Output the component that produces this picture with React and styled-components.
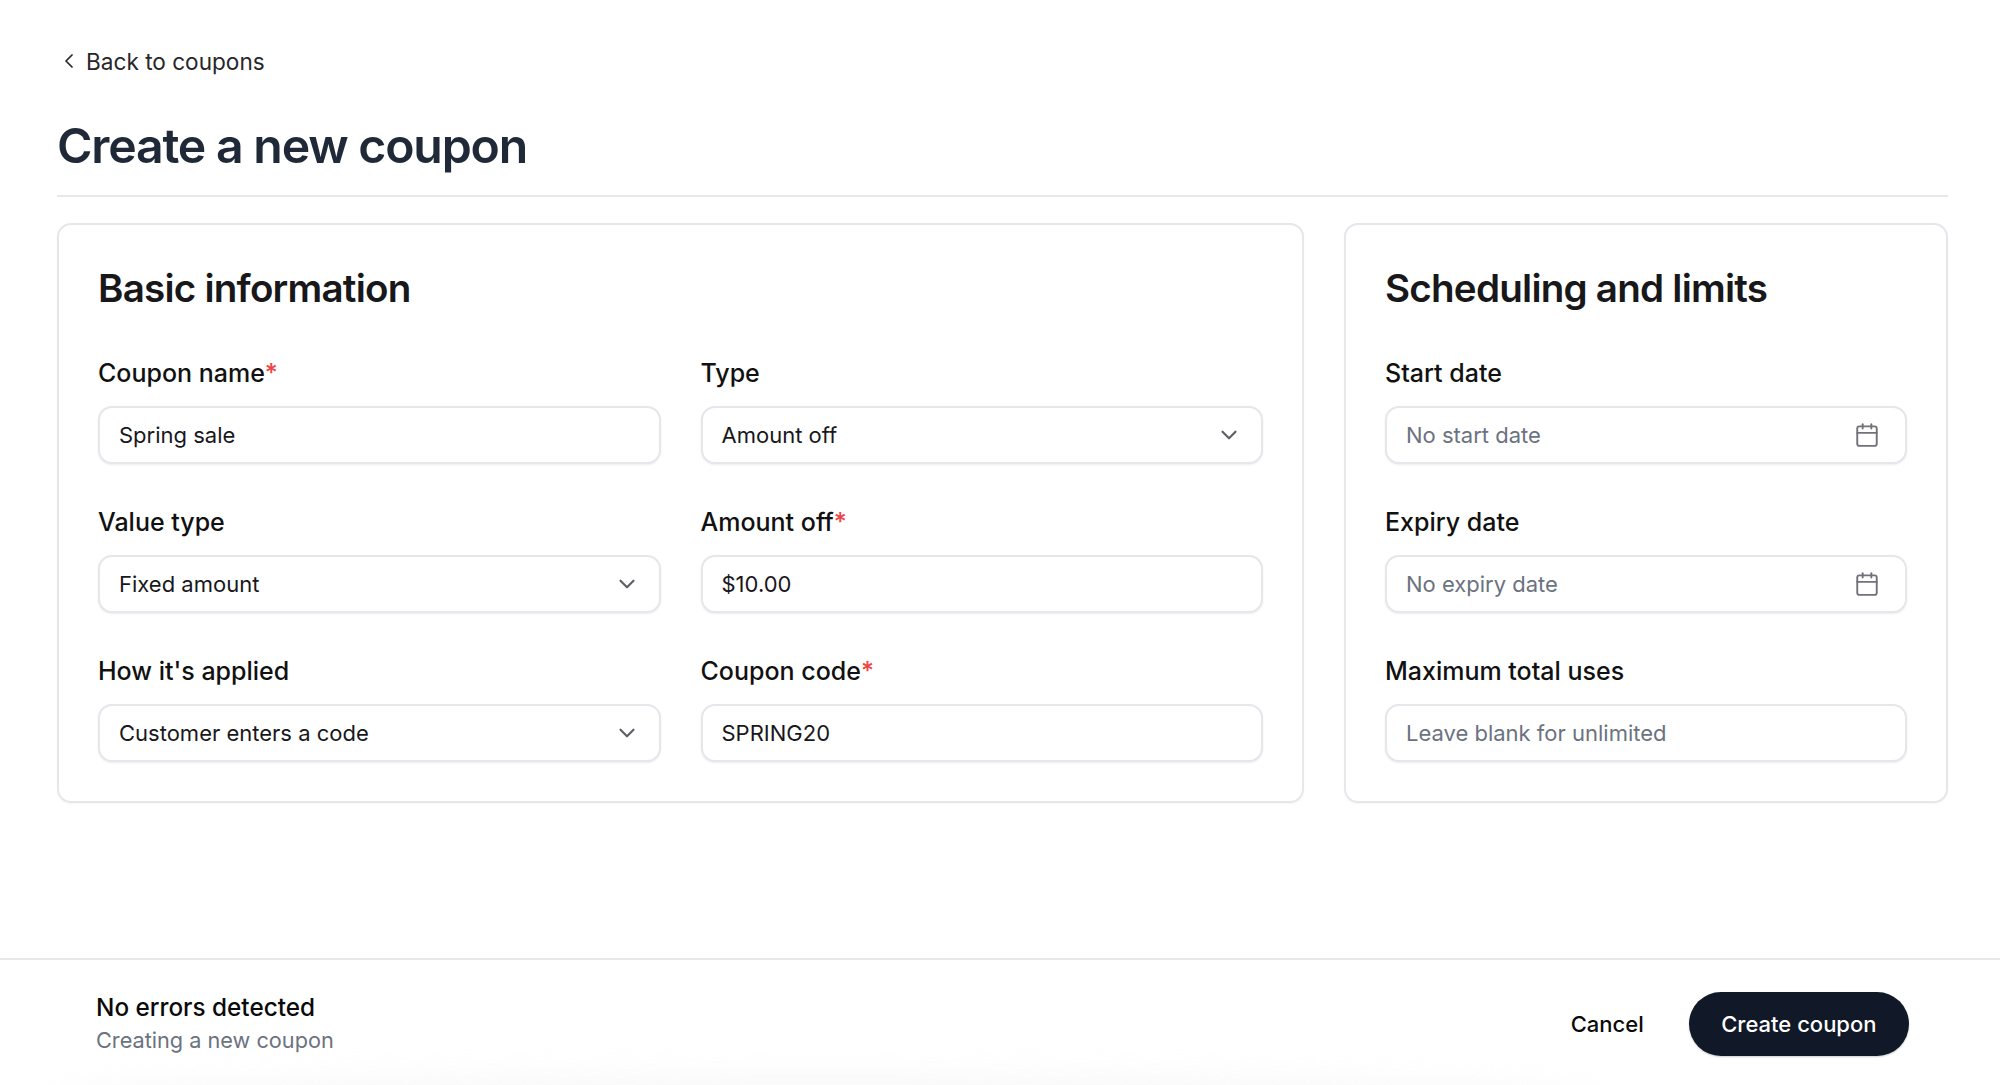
import React from "react";
import styled, { createGlobalStyle } from "styled-components";
import { Calendar, ChevronDown, ChevronLeft } from "lucide-react";

const GlobalStyle = createGlobalStyle`
  * {
    box-sizing: border-box;
  }

  html,
  body {
    margin: 0;
    background: #fff;
    font-family: Inter, "Liberation Sans", sans-serif;
  }
`;

const Page = styled.div`
  height: 1085px;
  display: flex;
  flex-direction: column;
  overflow: hidden;
`;

const Main = styled.main`
  flex: 1;
  padding: 45px 52px 0 57px;
`;

const BackLink = styled.a`
  display: flex;
  align-items: center;
  gap: 5px;
  height: 32px;
  font-size: 22.6px;
  color: #27272a;
`;

const Title = styled.h1`
  margin: 36px 0 0;
  padding-bottom: 17px;
  border-bottom: 2px solid #e5e7eb;
  font-size: 48.2px;
  line-height: 65px;
  font-weight: 600;
  letter-spacing: -0.025em;
  color: #1f2937;
`;

const Cards = styled.div`
  display: grid;
  grid-template-columns: 1247px 604px;
  gap: 40px;
  margin-top: 26px;
`;

const Card = styled.section`
  padding: 38px 39px 39px;
  height: 580px;
  border: 2px solid #e5e7eb;
  border-radius: 14px;
  box-shadow: 0 1px 2px rgba(17, 24, 39, 0.04);
`;

const CardTitle = styled.h2`
  margin: 0;
  height: 50px;
  font-size: 38.6px;
  line-height: 50px;
  font-weight: 600;
  letter-spacing: -0.02em;
  color: #18181b;
`;

const FieldGrid = styled.div`
  display: grid;
  grid-template-columns: ${(p) => (p.$columns === 2 ? "1fr 1fr" : "1fr")};
  column-gap: 40px;
  row-gap: 42px;
  margin-top: 44px;
`;

const Field = styled.div`
  display: flex;
  flex-direction: column;
  gap: 17px;
`;

const Label = styled.label`
  font-size: 25px;
  line-height: 32px;
  font-weight: 500;
  color: #111;
`;

const Required = styled.span`
  color: #ef4444;
`;

const Control = styled.div`
  display: flex;
  align-items: center;
  justify-content: space-between;
  height: 58px;
  padding: 0 19px;
  border: 2px solid #e5e7eb;
  border-radius: 14px;
  background: #fff;
  box-shadow: 0 1px 2px rgba(17, 24, 39, 0.08);
  font-size: 22px;
  color: ${(p) => (p.$placeholder ? "#6b7280" : "#18181b")};

  svg {
    flex-shrink: 0;
    color: ${(p) => (p.$placeholder ? "#71717a" : "#5f5f66")};
    margin-right: ${(p) => (p.$placeholder ? "6px" : "0")};
  }
`;

const Footer = styled.footer`
  position: relative;
  height: 127px;
  display: flex;
  align-items: center;
  justify-content: space-between;
  padding: 3px 91px 0 96px;
  border-top: 2px solid #e5e7eb;
  background: #fff;

  &::after {
    content: "";
    position: absolute;
    left: 50px;
    right: 400px;
    bottom: -34px;
    height: 44px;
    border-radius: 50%;
    background: #f4f4f5;
    filter: blur(14px);
    opacity: 0.6;
  }
`;

const Status = styled.div`
  position: relative;
  z-index: 1;
  display: flex;
  flex-direction: column;
`;

const StatusTitle = styled.div`
  font-size: 24.3px;
  line-height: 33px;
  font-weight: 500;
  color: #0a0a0a;
`;

const StatusText = styled.div`
  font-size: 21.7px;
  line-height: 33px;
  color: #6b7280;
`;

const Actions = styled.div`
  position: relative;
  z-index: 1;
  display: flex;
  align-items: center;
  gap: 45px;
`;

const CancelButton = styled.button`
  padding: 0;
  border: 0;
  background: none;
  font: 500 22px Inter, sans-serif;
  color: #0a0a0a;
`;

const PrimaryButton = styled.button`
  height: 64px;
  padding: 0 32.5px;
  border: 0;
  border-radius: 32px;
  background: #111827;
  font: 500 22px Inter, sans-serif;
  color: #fff;
  box-shadow: 0 1px 2px rgba(0, 0, 0, 0.2);
`;

const basicFields = [
  { label: "Coupon name", value: "Spring sale", required: true },
  { label: "Type", value: "Amount off", select: true },
  { label: "Value type", value: "Fixed amount", select: true },
  { label: "Amount off", value: "$10.00", required: true },
  { label: "How it's applied", value: "Customer enters a code", select: true },
  { label: "Coupon code", value: "SPRING20", required: true },
];

const limitFields = [
  { label: "Start date", placeholder: "No start date", date: true },
  { label: "Expiry date", placeholder: "No expiry date", date: true },
  { label: "Maximum total uses", placeholder: "Leave blank for unlimited" },
];

const FormField = ({ label, value, placeholder, required, select, date }) => (
  <Field>
    <Label>
      {label}
      {required && <Required>*</Required>}
    </Label>
    <Control $placeholder={!!placeholder}>
      {value || placeholder}
      {select && <ChevronDown size={26} strokeWidth={2} />}
      {date && <Calendar size={26} strokeWidth={1.75} />}
    </Control>
  </Field>
);

const App = () => {
  return (
    <Page>
      <GlobalStyle />
      <Main>
        <BackLink>
          <ChevronLeft size={24} strokeWidth={1.75} />
          Back to coupons
        </BackLink>
        <Title>Create a new coupon</Title>

        <Cards>
          <Card>
            <CardTitle>Basic information</CardTitle>
            <FieldGrid $columns={2}>
              {basicFields.map((field) => (
                <FormField {...field} key={field.label} />
              ))}
            </FieldGrid>
          </Card>

          <Card>
            <CardTitle>Scheduling and limits</CardTitle>
            <FieldGrid>
              {limitFields.map((field) => (
                <FormField {...field} key={field.label} />
              ))}
            </FieldGrid>
          </Card>
        </Cards>
      </Main>

      <Footer>
        <Status>
          <StatusTitle>No errors detected</StatusTitle>
          <StatusText>Creating a new coupon</StatusText>
        </Status>
        <Actions>
          <CancelButton>Cancel</CancelButton>
          <PrimaryButton>Create coupon</PrimaryButton>
        </Actions>
      </Footer>
    </Page>
  );
};

export default App;
